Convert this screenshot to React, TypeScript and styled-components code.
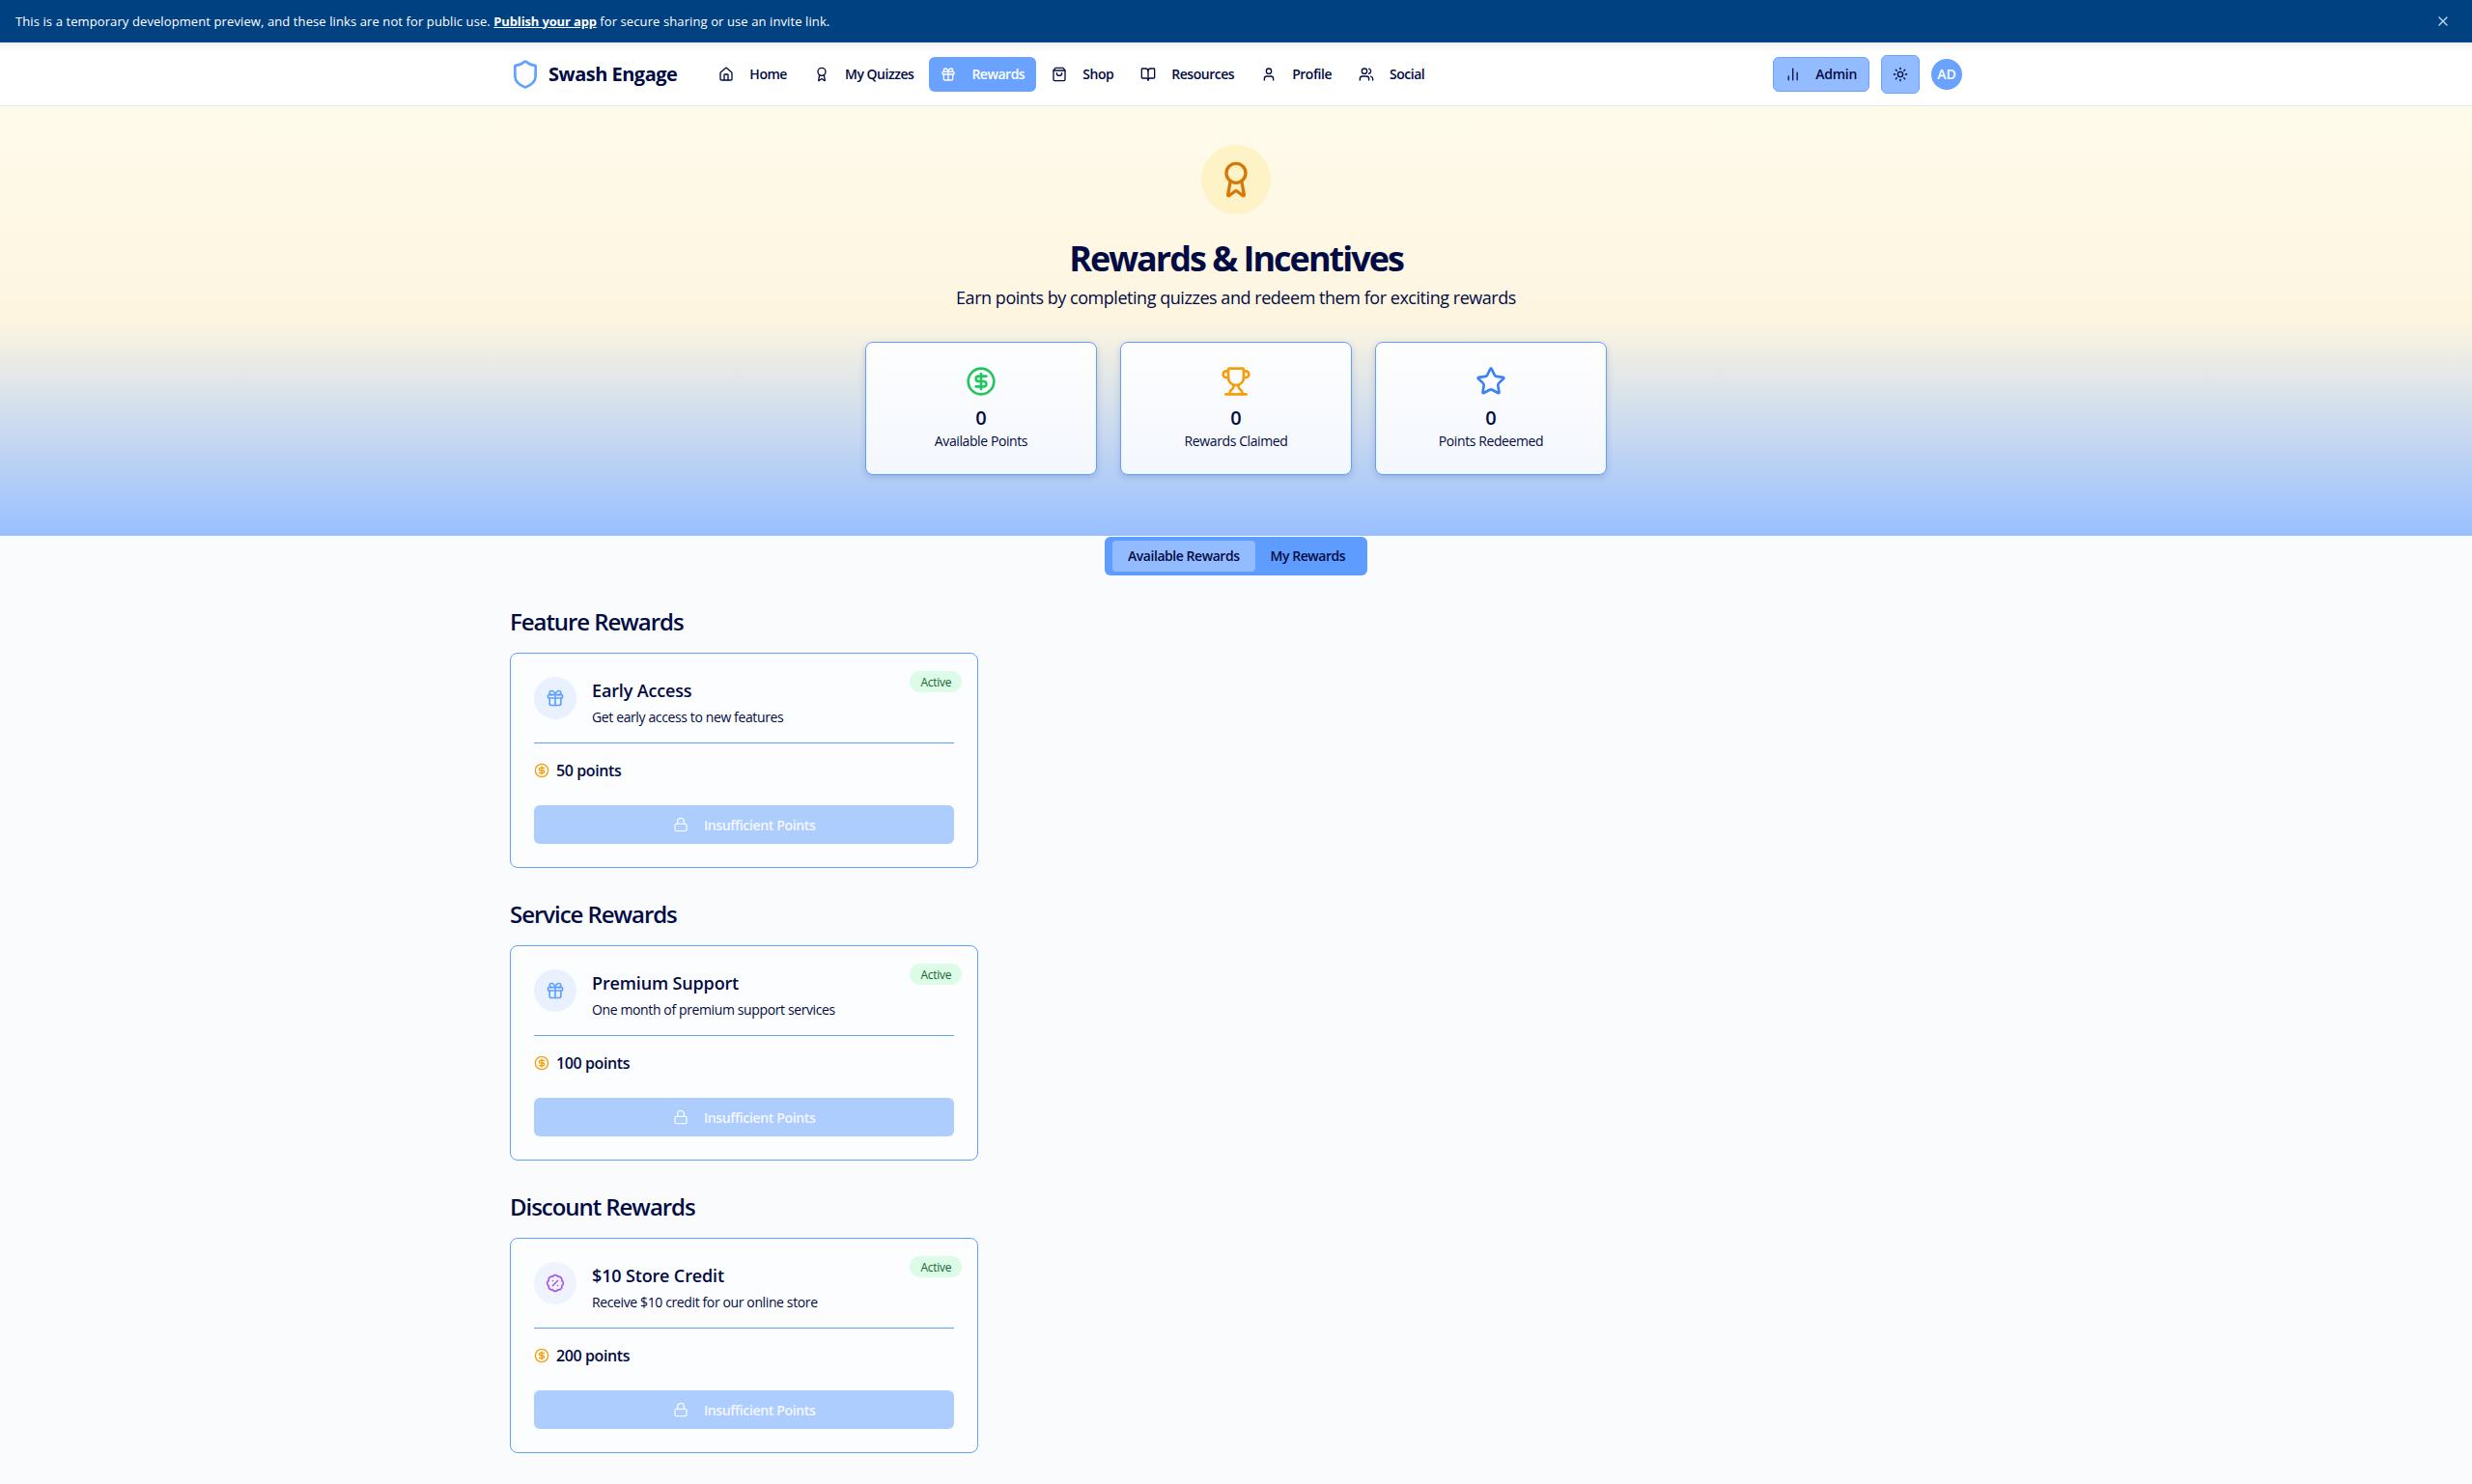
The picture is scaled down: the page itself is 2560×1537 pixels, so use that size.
import { createGlobalStyle, styled } from "styled-components";
import {
  Award, BadgePercent, BarChart2, BookOpen, CircleDollarSign, Gift, House, Lock,
  Shield, ShoppingBag, Star, Sun, Trophy, User, Users, X,
} from "lucide-react";
import type { ElementType } from "react";

const navy = "#020b43";
const blue = "#60a0ff";

const GlobalStyle = createGlobalStyle`
  * { box-sizing: border-box; }
  html, body { margin: 0; padding: 0; }
  body {
    background: #f9fbfd;
    color: ${navy};
    font-family: "Open Sans", "Noto Sans", sans-serif;
    font-size: 16px;
  }
`;

const Banner = styled.div`
  height: 44px;
  background: #004182;
  color: #fff;
  display: flex;
  align-items: center;
  justify-content: space-between;
  padding: 0 22px 0 16px;
  font-size: 13px;
  border-bottom: 1px solid #0b4a8a;
  letter-spacing: 0.1px;
  & a { color: #fff; font-weight: 700; letter-spacing: -0.15px; text-decoration: underline; }
  & svg { color: #c0d3e8; }
`;

const Header = styled.header`
  height: 66px;
  background: #fff;
  border-bottom: 1px solid #e7e9ec;
  box-shadow: inset 0 10px 10px -8px rgba(0, 0, 0, 0.1);
`;

const Container = styled.div`
  width: 1504px;
  margin: 0 auto;
`;

const HeaderRow = styled(Container)`
  height: 100%;
  display: flex;
  align-items: center;
`;

const Logo = styled.div`
  display: flex;
  align-items: center;
  gap: 8px;
  font-size: 20px;
  font-weight: 700;
  letter-spacing: -0.5px;
  margin-right: 31px;
  & svg { color: ${blue}; }
`;

const Nav = styled.nav`
  display: flex;
  gap: 4px;
`;

const NavItem = styled.a<{ $active?: boolean }>`
  display: flex;
  align-items: center;
  gap: 16px;
  height: 36px;
  padding: 0 12px;
  border-radius: 6px;
  font-size: 14px;
  font-weight: 600;
  letter-spacing: -0.47px;
  color: ${(p) => (p.$active ? "#fff" : navy)};
  background: ${(p) => (p.$active ? "#69a3ff" : "transparent")};
`;

const RightGroup = styled.div`
  margin-left: auto;
  display: flex;
  align-items: center;
  gap: 12px;
`;

const AdminButton = styled.button`
  display: flex;
  align-items: center;
  gap: 16px;
  width: 100px;
  height: 36px;
  padding: 0 12px;
  background: #93bbff;
  border: 1px solid #69a3ff;
  border-radius: 6px;
  color: ${navy};
  font: 600 14px "Open Sans", sans-serif;
  letter-spacing: -0.3px;
`;

const ThemeButton = styled.button`
  width: 40px;
  height: 40px;
  display: flex;
  align-items: center;
  justify-content: center;
  background: #93bbff;
  border: 1px solid #69a3ff;
  border-radius: 6px;
  color: ${navy};
  padding: 0;
`;

const Avatar = styled.div`
  width: 32px;
  height: 32px;
  border-radius: 50%;
  background: #69a3ff;
  color: #fff;
  font-size: 14px;
  font-weight: 600;
  display: flex;
  align-items: center;
  justify-content: center;
`;

const Hero = styled.section`
  height: 445px;
  padding-top: 40px;
  display: flex;
  flex-direction: column;
  align-items: center;
  background: linear-gradient(to bottom, #fffbeb 0%, #fdf5e0 50%, #98bfff 100%);
`;

const MedalCircle = styled.div`
  width: 72px;
  height: 72px;
  border-radius: 50%;
  background: #fef3c7;
  color: #d97706;
  display: flex;
  align-items: center;
  justify-content: center;
  margin-bottom: 26px;
`;

const Title = styled.h1`
  margin: 0 0 6px;
  font-size: 36px;
  line-height: 40px;
  font-weight: 700;
  letter-spacing: -2px;
`;

const Subtitle = styled.p`
  margin: 0 0 32px;
  font-size: 18px;
  line-height: 28px;
  letter-spacing: -0.46px;
`;

const StatGrid = styled.div`
  display: grid;
  grid-template-columns: repeat(3, 240px);
  gap: 24px;
`;

const StatCard = styled.div`
  height: 138px;
  padding: 24px;
  background: linear-gradient(to bottom, #fefefe, #f3f7fe);
  border: 1px solid ${blue};
  border-radius: 8px;
  box-shadow: 0 2px 6px rgba(30, 70, 140, 0.22);
  display: flex;
  flex-direction: column;
  align-items: center;
`;

const StatIcon = styled.div<{ $color: string }>`
  color: ${(p) => p.$color};
  height: 32px;
  margin-bottom: 8px;
`;

const StatValue = styled.div`
  font-size: 20px;
  line-height: 28px;
  font-weight: 600;
`;

const StatLabel = styled.div`
  font-size: 14px;
  line-height: 20px;
  letter-spacing: -0.4px;
`;

const Tabs = styled.div`
  width: 272px;
  height: 40px;
  margin: 1px auto 0;
  padding: 4px 8px;
  background: #5f9cff;
  border-radius: 6px;
  display: flex;
`;

const Tab = styled.button<{ $active?: boolean }>`
  height: 32px;
  border: 0;
  border-radius: 4px;
  padding: 0 16px 2px;
  background: ${(p) => (p.$active ? "#93bbff" : "transparent")};
  color: ${navy};
  font: 600 14px "Open Sans", sans-serif;
  letter-spacing: -0.45px;
  white-space: nowrap;
`;

const Main = styled(Container)`
  padding-top: 32px;
  display: flex;
  flex-direction: column;
  gap: 32px;
`;

const SectionTitle = styled.h2`
  margin: 0 0 16px;
  font-size: 24px;
  line-height: 32px;
  font-weight: 600;
  letter-spacing: -1.05px;
`;

const RewardGrid = styled.div`
  display: grid;
  grid-template-columns: repeat(3, 1fr);
  gap: 24px;
`;

const RewardCard = styled.article`
  position: relative;
  height: 223px;
  padding: 24px;
  background: #fcfdff;
  border: 1px solid ${blue};
  border-radius: 8px;
`;

const StatusBadge = styled.span`
  position: absolute;
  top: 18px;
  right: 16px;
  height: 22px;
  padding: 0 11px;
  display: flex;
  align-items: center;
  border-radius: 11px;
  background: #dcfce7;
  color: #166534;
  font-size: 12px;
  font-weight: 500;
  letter-spacing: -0.25px;
`;

const RewardHead = styled.div`
  display: flex;
  gap: 16px;
  height: 69px;
  border-bottom: 1px solid ${blue};
`;

const RewardIcon = styled.div<{ $color: string; $bg: string }>`
  width: 44px;
  height: 44px;
  border-radius: 50%;
  background: ${(p) => p.$bg};
  color: ${(p) => p.$color};
  display: flex;
  align-items: center;
  justify-content: center;
`;

const RewardName = styled.h3`
  margin: 0 0 4px;
  font-size: 18px;
  line-height: 28px;
  font-weight: 600;
  letter-spacing: -0.15px;
`;

const RewardDesc = styled.p`
  margin: 0;
  font-size: 14px;
  line-height: 20px;
  letter-spacing: -0.38px;
`;

const CostRow = styled.div`
  display: flex;
  align-items: center;
  gap: 7px;
  height: 24px;
  margin: 16px 0 24px;
  font-size: 16px;
  font-weight: 600;
  letter-spacing: -0.4px;
  & svg { color: #f59e0b; }
`;

const ClaimButton = styled.button`
  width: 100%;
  height: 40px;
  display: flex;
  align-items: center;
  justify-content: center;
  gap: 16px;
  border: 0;
  border-radius: 6px;
  background: #aecdff;
  color: #f4f8ff;
  font: 600 14px "Open Sans", sans-serif;
  letter-spacing: -0.35px;
`;

const navItems: { label: string; icon: ElementType; active?: boolean }[] = [
  { label: "Home", icon: House },
  { label: "My Quizzes", icon: Award },
  { label: "Rewards", icon: Gift, active: true },
  { label: "Shop", icon: ShoppingBag },
  { label: "Resources", icon: BookOpen },
  { label: "Profile", icon: User },
  { label: "Social", icon: Users },
];

const stats = [
  { label: "Available Points", icon: CircleDollarSign, color: "#22c55e" },
  { label: "Rewards Claimed", icon: Trophy, color: "#f59e0b" },
  { label: "Points Redeemed", icon: Star, color: "#3b82f6" },
];

const sections = [
  { title: "Feature Rewards", name: "Early Access", desc: "Get early access to new features", cost: 50, icon: Gift, color: blue, bg: "#e9f1ff" },
  { title: "Service Rewards", name: "Premium Support", desc: "One month of premium support services", cost: 100, icon: Gift, color: blue, bg: "#e9f1ff" },
  { title: "Discount Rewards", name: "$10 Store Credit", desc: "Receive $10 credit for our online store", cost: 200, icon: BadgePercent, color: "#a855f7", bg: "#eef3fe" },
];

export default function App() {
  return (
    <>
      <GlobalStyle />
      <Banner>
        <span>
          This is a temporary development preview, and these links are not for public use. <a>Publish your app</a> for secure sharing or use an invite link.
        </span>
        <X size={16} />
      </Banner>
      <Header>
        <HeaderRow>
          <Logo>
            <Shield size={32} strokeWidth={2} />
            Swash Engage
          </Logo>
          <Nav>
            {navItems.map((item) => (
              <NavItem key={item.label} $active={item.active}>
                <item.icon size={16} />
                {item.label}
              </NavItem>
            ))}
          </Nav>
          <RightGroup>
            <AdminButton>
              <BarChart2 size={16} />
              Admin
            </AdminButton>
            <ThemeButton>
              <Sun size={16} />
            </ThemeButton>
            <Avatar>AD</Avatar>
          </RightGroup>
        </HeaderRow>
      </Header>
      <Hero>
        <MedalCircle>
          <Award size={40} />
        </MedalCircle>
        <Title>Rewards &amp; Incentives</Title>
        <Subtitle>Earn points by completing quizzes and redeem them for exciting rewards</Subtitle>
        <StatGrid>
          {stats.map((s) => (
            <StatCard key={s.label}>
              <StatIcon $color={s.color}>
                <s.icon size={32} />
              </StatIcon>
              <StatValue>0</StatValue>
              <StatLabel>{s.label}</StatLabel>
            </StatCard>
          ))}
        </StatGrid>
      </Hero>
      <Tabs>
        <Tab $active>Available Rewards</Tab>
        <Tab>My Rewards</Tab>
      </Tabs>
      <Main>
        {sections.map((s) => (
          <section key={s.title}>
            <SectionTitle>{s.title}</SectionTitle>
            <RewardGrid>
              <RewardCard>
                <StatusBadge>Active</StatusBadge>
                <RewardHead>
                  <RewardIcon $color={s.color} $bg={s.bg}>
                    <s.icon size={20} />
                  </RewardIcon>
                  <div>
                    <RewardName>{s.name}</RewardName>
                    <RewardDesc>{s.desc}</RewardDesc>
                  </div>
                </RewardHead>
                <CostRow>
                  <CircleDollarSign size={16} />
                  {s.cost} points
                </CostRow>
                <ClaimButton>
                  <Lock size={16} />
                  Insufficient Points
                </ClaimButton>
              </RewardCard>
            </RewardGrid>
          </section>
        ))}
      </Main>
    </>
  );
}
